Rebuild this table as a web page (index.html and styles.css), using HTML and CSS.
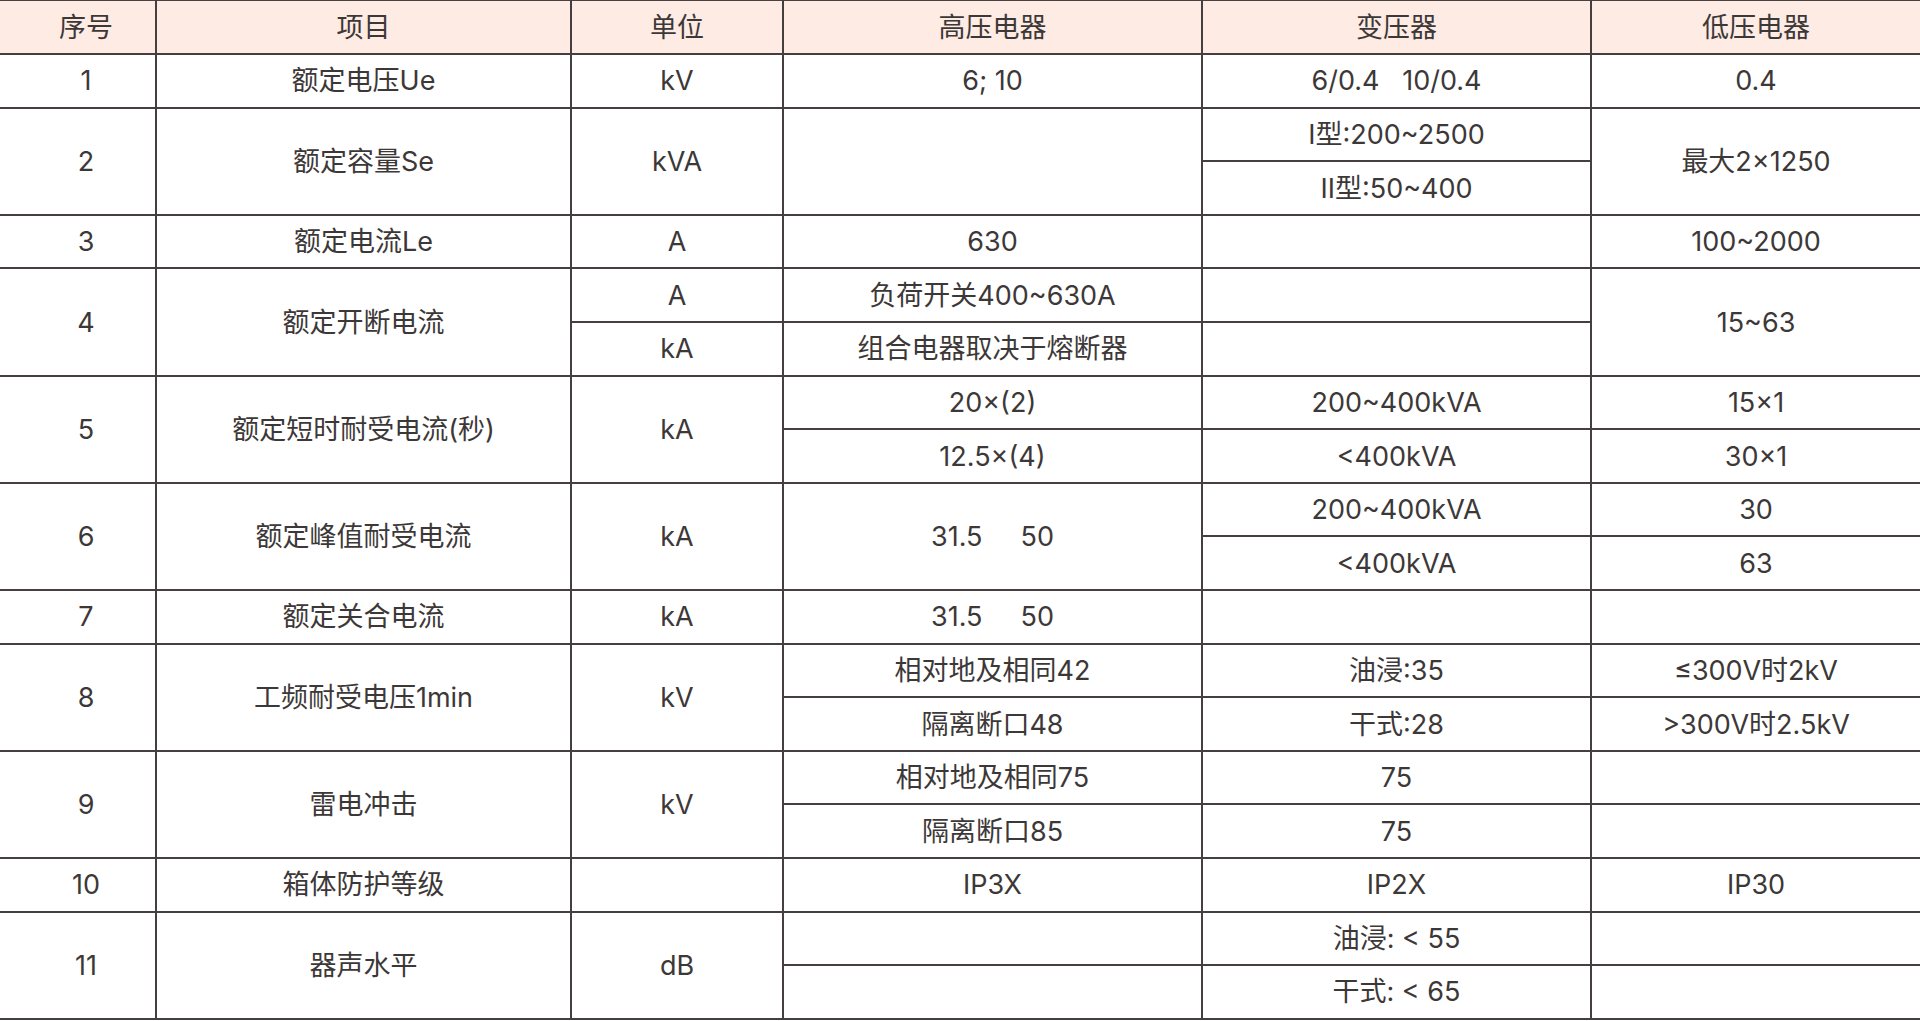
FILE: index.html
```html
<!DOCTYPE html>
<html lang="zh-CN">
<head>
<meta charset="utf-8">
<title>参数表</title>
<link rel="stylesheet" href="styles.css">
</head>
<body>
<table class="spec">
  <colgroup>
    <col class="c-no">
    <col class="c-item">
    <col class="c-unit">
    <col class="c-hv">
    <col class="c-tr">
    <col class="c-lv">
  </colgroup>
  <thead>
    <tr><th class="no">序号</th><th>项目</th><th>单位</th><th>高压电器</th><th>变压器</th><th class="end">低压电器</th></tr>
  </thead>
  <tbody>
    <tr><td class="no">1</td><td>额定电压Ue</td><td>kV</td><td>6; 10</td><td class="pre">6/0.4   10/0.4</td><td class="end">0.4</td></tr>

    <tr><td class="no" rowspan="2">2</td><td rowspan="2">额定容量Se</td><td rowspan="2">kVA</td><td rowspan="2"></td><td>I型:200~2500</td><td class="end" rowspan="2">最大2×1250</td></tr>
    <tr><td>II型:50~400</td></tr>

    <tr><td class="no">3</td><td>额定电流Le</td><td>A</td><td>630</td><td></td><td class="end">100~2000</td></tr>

    <tr><td class="no" rowspan="2">4</td><td rowspan="2">额定开断电流</td><td>A</td><td>负荷开关400~630A</td><td></td><td class="end" rowspan="2">15~63</td></tr>
    <tr><td>kA</td><td>组合电器取决于熔断器</td><td></td></tr>

    <tr><td class="no" rowspan="2">5</td><td rowspan="2">额定短时耐受电流(秒)</td><td rowspan="2">kA</td><td>20×(2)</td><td>200~400kVA</td><td class="end">15×1</td></tr>
    <tr><td>12.5×(4)</td><td>&lt;400kVA</td><td class="end">30×1</td></tr>

    <tr><td class="no" rowspan="2">6</td><td rowspan="2">额定峰值耐受电流</td><td rowspan="2">kA</td><td rowspan="2" class="pre">31.5     50</td><td>200~400kVA</td><td class="end">30</td></tr>
    <tr><td>&lt;400kVA</td><td class="end">63</td></tr>

    <tr><td class="no">7</td><td>额定关合电流</td><td>kA</td><td class="pre">31.5     50</td><td></td><td class="end"></td></tr>

    <tr><td class="no" rowspan="2">8</td><td rowspan="2">工频耐受电压1min</td><td rowspan="2">kV</td><td>相对地及相同42</td><td>油浸:35</td><td class="end">≤300V时2kV</td></tr>
    <tr><td>隔离断口48</td><td>干式:28</td><td class="end">&gt;300V时2.5kV</td></tr>

    <tr><td class="no" rowspan="2">9</td><td rowspan="2">雷电冲击</td><td rowspan="2">kV</td><td>相对地及相同75</td><td>75</td><td class="end"></td></tr>
    <tr><td>隔离断口85</td><td>75</td><td class="end"></td></tr>

    <tr><td class="no">10</td><td>箱体防护等级</td><td></td><td>IP3X</td><td>IP2X</td><td class="end">IP30</td></tr>

    <tr><td class="no" rowspan="2">11</td><td rowspan="2">器声水平</td><td rowspan="2">dB</td><td></td><td>油浸: &lt; 55</td><td class="end"></td></tr>
    <tr><td></td><td>干式: &lt; 65</td><td class="end"></td></tr>
  </tbody>
</table>
</body>
</html>
```

FILE: styles.css
```css
html, body {
  margin: 0;
  padding: 0;
  background: #ffffff;
}

.spec {
  width: 1920px;
  border-collapse: collapse;
  table-layout: fixed;
  font-family: Inter, "Noto Sans CJK SC", "Noto Sans", sans-serif;
  font-size: 27px;
  color: #3d3838;
  border-top: 1px solid #4a4242;
}

.c-no { width: 156px; }
.c-item { width: 415px; }
.c-unit { width: 212px; }
.c-hv { width: 419px; }
.c-tr { width: 389px; }
.c-lv { width: 329px; }

.spec th,
.spec td {
  height: 53.6px;
  padding: 0;
  border: 2px solid #463f3f;
  text-align: center;
  vertical-align: middle;
  font-weight: 400;
  line-height: 1;
  box-sizing: border-box;
}

.spec thead th {
  background: #fdebe4;
  border-top: none;
}

.spec .no {
  border-left: none;
  padding-left: 17px;
}

.spec .end {
  border-right: none;
}

.pre { white-space: pre; }
```
